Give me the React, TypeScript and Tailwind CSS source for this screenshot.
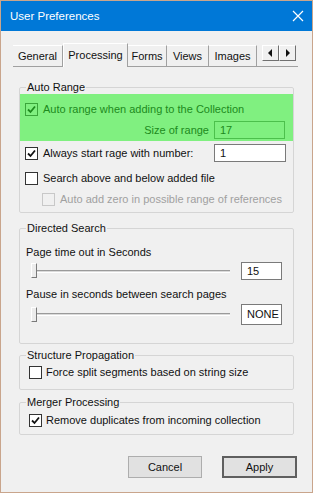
import type { ReactNode } from 'react'

const font = { fontFamily: '"Liberation Sans", Arial, sans-serif' }

function Check({ checked, disabled, green }: { checked?: boolean; disabled?: boolean; green?: boolean }) {
  const border = disabled ? 'border-[#c8c8c8]' : green ? 'border-[#3aa63a]' : 'border-[#333333]'
  const bg = disabled ? 'bg-[#f0f0f0]' : green ? 'bg-[#80f080]' : 'bg-white'
  return (
    <span className={`w-[13px] h-[13px] border ${border} ${bg} flex items-center justify-center shrink-0`}>
      {checked && (
        <svg width="9" height="9" viewBox="0 0 9 9">
          <path d="M1 4.5 L3.5 7 L8 1.5" fill="none" stroke={green ? '#1d8a1d' : '#111'} strokeWidth="1.8" />
        </svg>
      )}
    </span>
  )
}

function Group({ title, children, className = '' }: { title: string; children: ReactNode; className?: string }) {
  return (
    <fieldset className={`border border-[#d5d5d5] rounded-[2px] mx-[18px] ${className}`}>
      <legend className="ml-[6px] px-[1px] text-[11px] text-[#111] leading-[14px]">{title}</legend>
      {children}
    </fieldset>
  )
}

function Slider() {
  return (
    <div className="relative h-[18px] w-[199px] ml-[11px] flex items-center">
      <div className="h-[3px] w-full border-t border-[#9a9a9a] border-b border-b-white bg-[#dadada]" />
      <div className="absolute left-0 top-[1px] w-[6px] h-[15px] bg-[#ececec] border border-[#7a7a7a] border-t-white border-l-white" />
    </div>
  )
}

function Box({ value, green, className = '' }: { value: string; green?: boolean; className?: string }) {
  return (
    <div
      className={`border ${green ? 'border-[#4cc04c] bg-[#80f080] text-[#1d8a1d]' : 'border-[#7a7a7a] bg-white text-[#111]'} px-[5px] text-[11px] ${className}`}
    >
      {value}
    </div>
  )
}

function Tab({ label, active, w }: { label: string; active?: boolean; w: string }) {
  if (active) {
    return (
      <div className={`${w} h-[24px] -mb-[1px] bg-[#f0f0f0] border border-white border-r-[#a0a0a0] border-b-0 flex items-start justify-center pt-[3px] text-[11px] text-[#111] z-10`}>
        {label}
      </div>
    )
  }
  return (
    <div className={`${w} h-[21px] bg-[#f0f0f0] border-r border-[#a0a0a0] border-t border-t-white flex items-center justify-center text-[11px] text-[#111]`}>
      {label}
    </div>
  )
}

export default function App() {
  return (
    <div style={font} className="w-[313px] h-[493px] bg-[#f0f0f0] border border-[#c9a58c] flex flex-col select-none">
      <div className="h-[30px] shrink-0 bg-[#0078d7] flex items-center justify-between pl-[9px] pr-[8px] text-white">
        <span className="text-[11.5px] mt-[1px]">User Preferences</span>
        <svg width="12" height="12" viewBox="0 0 12 12">
          <path d="M1 1 L11 11 M11 1 L1 11" stroke="white" strokeWidth="1.2" />
        </svg>
      </div>

      <div className="pl-[12px] pr-[14px] pt-[12px]">
        <div className="flex items-end border-b border-[#a0a0a0] h-[24px]">
          <Tab label="General" w="w-[50px]" />
          <Tab label="Processing" active w="w-[65px]" />
          <Tab label="Forms" w="w-[39px]" />
          <Tab label="Views" w="w-[42px]" />
          <Tab label="Images" w="w-[48px]" />
          <div className="ml-[5px] mb-[5px] flex">
            <div className="w-[17px] h-[16px] bg-[#f0f0f0] border border-white border-r-[#707070] border-b-[#707070] flex items-center justify-center">
              <svg width="5" height="8" viewBox="0 0 5 8"><path d="M4 0 L0 4 L4 8 Z" fill="#111" /></svg>
            </div>
            <div className="w-[17px] h-[16px] bg-[#f0f0f0] border border-white border-r-[#707070] border-b-[#707070] flex items-center justify-center">
              <svg width="5" height="8" viewBox="0 0 5 8"><path d="M1 0 L5 4 L1 8 Z" fill="#111" /></svg>
            </div>
          </div>
        </div>
      </div>

      <div className="pt-[13px] flex flex-col text-[11px] text-[#111]">
        <Group title="Auto Range" className="h-[133px]">
          <div className="bg-[#80f080] h-[47px] pt-[7px] text-[#1d8a1d]">
            <label className="flex items-center gap-[5px] pl-[5px] h-[17px]">
              <Check checked green />
              <span>Auto range when adding to the Collection</span>
            </label>
            <div className="flex items-center justify-end gap-[5px] pr-[8px] mt-[3px]">
              <span>Size of range</span>
              <Box value="17" green className="w-[71px] h-[18px] leading-[16px]" />
            </div>
          </div>
          <div className="flex items-center pl-[5px] pr-[7px] mt-[3px]">
            <label className="flex items-center gap-[5px] flex-1">
              <Check checked />
              <span>Always start rage with number:</span>
            </label>
            <Box value="1" className="w-[72px] h-[18px] leading-[16px]" />
          </div>
          <label className="flex items-center gap-[5px] pl-[5px] mt-[8px] h-[17px]">
            <Check />
            <span>Search above and below added file</span>
          </label>
          <label className="flex items-center gap-[5px] pl-[22px] mt-[4px] h-[17px] text-[#a0a0a0]">
            <Check disabled />
            <span>Auto add zero in possible range of references</span>
          </label>
        </Group>

        <Group title="Directed Search" className="mt-[8px] h-[123px]">
          <div className="pl-[6px] mt-[11px] leading-[13px]">Page time out in Seconds</div>
          <div className="flex items-center justify-between pr-[11px] mt-[3px]">
            <Slider />
            <Box value="15" className="w-[41px] h-[18px] leading-[16px]" />
          </div>
          <div className="pl-[6px] mt-[8px] leading-[13px]">Pause in seconds between search pages</div>
          <div className="flex items-center justify-between pr-[11px] mt-[3px]">
            <Slider />
            <Box value="NONE" className="w-[41px] h-[21px] leading-[19px] px-[4px]" />
          </div>
        </Group>

        <Group title="Structure Propagation" className="mt-[4px] h-[42px]">
          <label className="flex items-center gap-[4px] pl-[9px] mt-[2px] h-[17px]">
            <Check />
            <span>Force split segments based on string size</span>
          </label>
        </Group>

        <Group title="Merger Processing" className="mt-[5px] h-[40px]">
          <label className="flex items-center gap-[4px] pl-[9px] mt-[3px] h-[17px]">
            <Check checked />
            <span>Remove duplicates from incoming collection</span>
          </label>
        </Group>

        <div className="flex justify-end gap-[20px] pr-[15px] mt-[21px]">
          <button className="w-[74px] h-[22px] bg-[#e1e1e1] border border-[#adadad] text-[11px] text-[#111]">Cancel</button>
          <button className="w-[75px] h-[22px] bg-[#e1e1e1] border-2 border-[#5f5f5f] text-[11px] text-[#111]">Apply</button>
        </div>
      </div>
    </div>
  )
}
